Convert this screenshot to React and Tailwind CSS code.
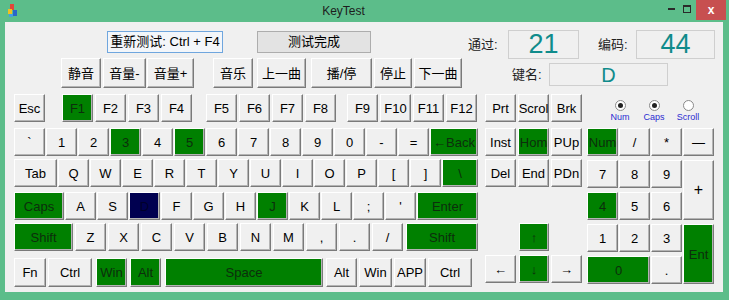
import React from "react";
import clsx from "clsx";

const FONT = { fontFamily: '"Liberation Sans", "Noto Sans CJK SC", sans-serif' };

const GREEN = new Set(["F1", "3", "5", "\\", "Caps", "J", "Shift", "Back", "Space", "Hom", "Num", "n4", "up", "down", "n0", "Ent"]);

// one raised key / button in the old win32 look
const Key = ({ w = "w-[31px]", h = "h-[28px]", tone, className, children }) => (
  <div
    className={clsx(
      "flex shrink-0 items-center justify-center border text-[13px] leading-none",
      "border-t-white border-l-white border-r-[#7a7a7a] border-b-[#7a7a7a] shadow-[inset_-1px_-1px_0_#b4b4b4]",
      tone === "on" && "bg-[#008000] text-[#0c2e0c]",
      tone === "dark" && "bg-[#000050] text-[#00002a]",
      !tone && "bg-[#f0f0f0] text-black",
      w,
      h,
      className
    )}
  >
    {children}
  </div>
);

const Radio = ({ label, checked }) => (
  <div className="flex w-[34px] flex-col items-center">
    <div className="mt-[6px] flex h-[11px] w-[11px] items-center justify-center rounded-full border border-[#8a8a8a] bg-white">
      {checked && <div className="h-[5px] w-[5px] rounded-full bg-[#222]" />}
    </div>
    <span className="mt-[2px] text-[9px] leading-none text-[#2b2bd0]">{label}</span>
  </div>
);

const Display = ({ w, h, size, children }) => (
  <div className={clsx("flex items-center justify-center border border-[#cfcfcf] bg-[#f0f0f0] leading-none text-[#0f8b8b]", w, h, size)}>
    {children}
  </div>
);

export default function App() {
  const numRow = ["`", "1", "2", "3", "4", "5", "6", "7", "8", "9", "0", "-", "="];
  const qRow = ["Q", "W", "E", "R", "T", "Y", "U", "I", "O", "P", "[", "]"];
  const aRow = ["A", "S", "D", "F", "G", "H", "J", "K", "L", ";", "'"];
  const zRow = ["Z", "X", "C", "V", "B", "N", "M", ",", ".", "/"];
  const tone = (k) => (k === "D" ? "dark" : GREEN.has(k) ? "on" : undefined);

  return (
    <div className="h-[300px] w-[729px] overflow-hidden bg-[#5cbd8a]" style={FONT}>
      {/* title bar */}
      <div className="flex h-[22px] items-center">
        <svg width="12" height="14" viewBox="0 0 12 14" className="ml-[7px]">
          <rect x="3" y="0" width="4" height="6" fill="#e2463a" />
          <rect x="1" y="5" width="4" height="5" fill="#f0c020" />
          <rect x="6" y="6" width="4" height="6" fill="#2a66c8" />
          <rect x="2" y="10" width="4" height="3" fill="#46a0e0" />
        </svg>
        <span className="flex-1 text-center text-[12px] text-[#1d1d1d]">KeyTest</span>
        <span className="mb-[4px] h-[2px] w-[7px] bg-[#2a2a2a]" />
        <span className="ml-[8px] mb-[4px] h-[8px] w-[8px] border border-[#2a2a2a] border-t-2" />
        <div className="mb-[2px] ml-[5px] mr-[3px] flex h-[20px] w-[30px] items-center justify-center self-start bg-[#c75050] text-[12px] font-bold text-white">
          x
        </div>
      </div>

      {/* client area */}
      <div className="ml-[5px] h-[270px] w-[718px] bg-[#f0f0f0] pt-[8px] text-black">
        {/* row A */}
        <div className="flex h-[28px] items-start">
          <div className="ml-[102px] mt-[1px] flex h-[22px] w-[116px] items-center justify-center border border-[#6fa6de] bg-[#f3f6fa] text-[13px]">
            重新测试: Ctrl + F4
          </div>
          <div className="ml-[34px] mt-[1px] flex h-[22px] w-[114px] items-center justify-center border border-[#adadad] bg-[#e3e3e3] text-[13px]">
            测试完成
          </div>
          <div className="ml-[97px] flex h-[29px] w-[40px] items-center text-[13px] text-[#222]">通过:</div>
          <Display w="w-[71px]" h="h-[29px]" size="text-[27px]">21</Display>
          <div className="ml-[19px] flex h-[29px] w-[38px] items-center text-[13px] text-[#222]">编码:</div>
          <Display w="w-[79px]" h="h-[29px]" size="text-[27px]">44</Display>
        </div>

        {/* row B */}
        <div className="flex h-[30px] items-start">
          <Key w="w-[40px]" h="h-[30px]" className="ml-[56px]">静音</Key>
          <Key w="w-[43px]" h="h-[30px]" className="ml-[2px]">音量-</Key>
          <Key w="w-[47px]" h="h-[30px]" className="ml-[1px]">音量+</Key>
          <Key w="w-[40px]" h="h-[30px]" className="ml-[19px]">音乐</Key>
          <Key w="w-[49px]" h="h-[30px]" className="ml-[4px]">上一曲</Key>
          <Key w="w-[61px]" h="h-[30px]" className="ml-[5px]">播/停</Key>
          <Key w="w-[38px]" h="h-[30px]" className="ml-[2px]">停止</Key>
          <Key w="w-[48px]" h="h-[30px]" className="ml-[2px]">下一曲</Key>
          <div className="ml-[50px] mt-[5px] flex h-[23px] w-[37px] items-center text-[13px] text-[#222]">键名:</div>
          <div className="mt-[5px]">
            <Display w="w-[119px]" h="h-[23px]" size="text-[20px]">D</Display>
          </div>
        </div>

        {/* function key row */}
        <div className="mt-[6px] flex h-[28px] items-start">
          <Key className="ml-[9px]">Esc</Key>
          <div className="ml-[17px] flex gap-[2px]">
            {["F1", "F2", "F3", "F4"].map((k) => <Key key={k} tone={tone(k)}>{k}</Key>)}
          </div>
          <div className="ml-[14px] flex gap-[2px]">
            {["F5", "F6", "F7", "F8"].map((k) => <Key key={k}>{k}</Key>)}
          </div>
          <div className="ml-[11px] flex gap-[2px]">
            {["F9", "F10", "F11", "F12"].map((k) => <Key key={k}>{k}</Key>)}
          </div>
          <div className="ml-[8px] flex gap-[2px]">
            <Key>Prt</Key>
            <Key>Scrol</Key>
            <Key>Brk</Key>
          </div>
          <div className="ml-[21px] flex">
            <Radio label="Num" checked />
            <Radio label="Caps" checked />
            <Radio label="Scroll" />
          </div>
        </div>

        {/* lower block */}
        <div className="mt-[6px] flex items-start">
          {/* main keys */}
          <div className="ml-[9px] flex w-[464px] flex-col">
            <div className="flex gap-[1px]">
              {numRow.map((k) => <Key key={k} tone={tone(k)}>{k}</Key>)}
              <Key w="w-[48px]" tone="on">←Back</Key>
            </div>
            <div className="mt-[3px] flex gap-[1px]">
              <Key w="w-[43px]">Tab</Key>
              {qRow.map((k) => <Key key={k}>{k}</Key>)}
              <Key w="w-[36px]" tone="on">\</Key>
            </div>
            <div className="mt-[5px] flex gap-[1px]">
              <Key w="w-[50px]" tone="on">Caps</Key>
              {aRow.map((k) => <Key key={k} tone={tone(k)}>{k}</Key>)}
              <Key w="w-[61px]" tone="on">Enter</Key>
            </div>
            <div className="mt-[3px] flex">
              <Key w="w-[59px]" tone="on">Shift</Key>
              <div className="ml-[2px] flex gap-[2px]">
                {zRow.map((k) => <Key key={k}>{k}</Key>)}
              </div>
              <Key w="w-[72px]" tone="on" className="ml-[3px]">Shift</Key>
            </div>
            <div className="mt-[7px] flex">
              <Key w="w-[32px]" h="h-[29px]">Fn</Key>
              <Key w="w-[44px]" h="h-[29px]" className="ml-[2px]">Ctrl</Key>
              <Key h="h-[29px]" tone="on" className="ml-[4px]">Win</Key>
              <Key h="h-[29px]" tone="on" className="ml-[3px]">Alt</Key>
              <Key w="w-[158px]" h="h-[29px]" tone="on" className="ml-[4px]">Space</Key>
              <Key h="h-[29px]" className="ml-[3px]">Alt</Key>
              <Key w="w-[33px]" h="h-[29px]" className="ml-[2px]">Win</Key>
              <Key w="w-[32px]" h="h-[29px]" className="ml-[2px]">APP</Key>
              <Key w="w-[44px]" h="h-[29px]" className="ml-[2px]">Ctrl</Key>
            </div>
          </div>

          {/* navigation */}
          <div className="ml-[7px] flex w-[97px] flex-col">
            <div className="flex gap-[2px]">
              <Key>Inst</Key>
              <Key tone="on">Hom</Key>
              <Key>PUp</Key>
            </div>
            <div className="mt-[3px] flex gap-[2px]">
              <Key>Del</Key>
              <Key>End</Key>
              <Key>PDn</Key>
            </div>
            <Key w="w-[30px]" tone="on" className="ml-[34px] mt-[36px] text-[11px]">↑</Key>
            <div className="mt-[4px] flex">
              <Key className="text-[11px]">←</Key>
              <Key w="w-[30px]" tone="on" className="ml-[3px] text-[11px]">↓</Key>
              <Key className="ml-[2px] text-[11px]">→</Key>
            </div>
          </div>

          {/* numpad */}
          <div className="ml-[5px] grid grid-cols-[31px_31px_31px_31px] grid-rows-[28px_28px_28px_28px_28px] gap-x-[1px] gap-y-[4px]">
            <Key tone="on">Num</Key>
            <Key>/</Key>
            <Key>*</Key>
            <Key>—</Key>
            <Key>7</Key>
            <Key>8</Key>
            <Key>9</Key>
            <Key h="h-full" className="row-span-2 text-[16px]">+</Key>
            <Key tone="on">4</Key>
            <Key>5</Key>
            <Key>6</Key>
            <Key>1</Key>
            <Key>2</Key>
            <Key>3</Key>
            <Key h="h-full" tone="on" className="row-span-2">Ent</Key>
            <Key w="w-full" tone="on" className="col-span-2">0</Key>
            <Key>.</Key>
          </div>
        </div>
      </div>
    </div>
  );
}
